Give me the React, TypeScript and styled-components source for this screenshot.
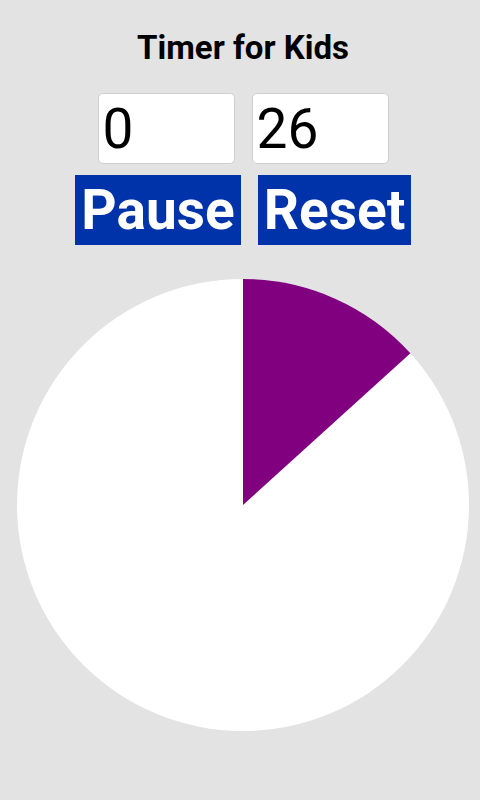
import React from "react";
import styled, {createGlobalStyle} from "styled-components";

const GlobalStyle = createGlobalStyle`
    html, body {
        margin: 0;
        padding: 0;
        background: #e3e3e3;
        font-family: Roboto, "Liberation Sans", sans-serif;
    }
`;

const Page = styled.div`
    width: 480px;
    height: 800px;
    display: flex;
    flex-direction: column;
    align-items: center;
    overflow: hidden;
`;

const Title = styled.h1`
    margin: 29px 0 0 6px;
    font-size: 33px;
    font-weight: 700;
    line-height: 38px;
    color: #000;
`;

const Row = styled.div<{ $top: number }>`
    display: flex;
    gap: 17px;
    margin: ${p => p.$top}px 0 0 6px;
`;

const TimeField = styled.input`
    box-sizing: border-box;
    width: 137px;
    height: 71px;
    margin: 0;
    padding: 0 0 0 4px;
    border: 1px solid #cfcfcf;
    border-radius: 5px;
    background: #fff;
    font-family: Roboto, "Liberation Sans", sans-serif;
    font-size: 55px;
    color: #000;
    outline: none;
`;

const ActionButton = styled.button<{ $width: number }>`
    box-sizing: border-box;
    width: ${p => p.$width}px;
    height: 70px;
    margin: 0;
    padding: 0;
    border: none;
    background: #0033aa;
    color: #fff;
    font-family: Roboto, "Liberation Sans", sans-serif;
    font-size: 55px;
    font-weight: 700;
    white-space: nowrap;
    overflow: hidden;
    cursor: pointer;
`;

const Clock = styled.div`
    margin: 34px 0 0 6px;
    width: 452px;
    height: 452px;

    & > svg {
        display: block;
    }
`;

const R = 226;

const wedgePath = (deg: number) => {
    const a = (deg * Math.PI) / 180;
    const x = R + R * Math.sin(a);
    const y = R - R * Math.cos(a);
    const large = deg > 180 ? 1 : 0;
    return `M ${R} ${R} L ${R} 0 A ${R} ${R} 0 ${large} 1 ${x} ${y} Z`;
};

export default function App() {
    const elapsed = 47.8;

    return (
        <Page>
            <GlobalStyle/>
            <Title>Timer for Kids</Title>
            <Row $top={26}>
                <TimeField defaultValue="0"/>
                <TimeField defaultValue="26"/>
            </Row>
            <Row $top={11}>
                <ActionButton $width={166}>Pause</ActionButton>
                <ActionButton $width={153}>Reset</ActionButton>
            </Row>
            <Clock>
                <svg width={452} height={452} viewBox="0 0 452 452">
                    <circle cx={R} cy={R} r={R} fill="#fff"/>
                    <path d={wedgePath(elapsed)} fill="#800080"/>
                </svg>
            </Clock>
        </Page>
    );
}
